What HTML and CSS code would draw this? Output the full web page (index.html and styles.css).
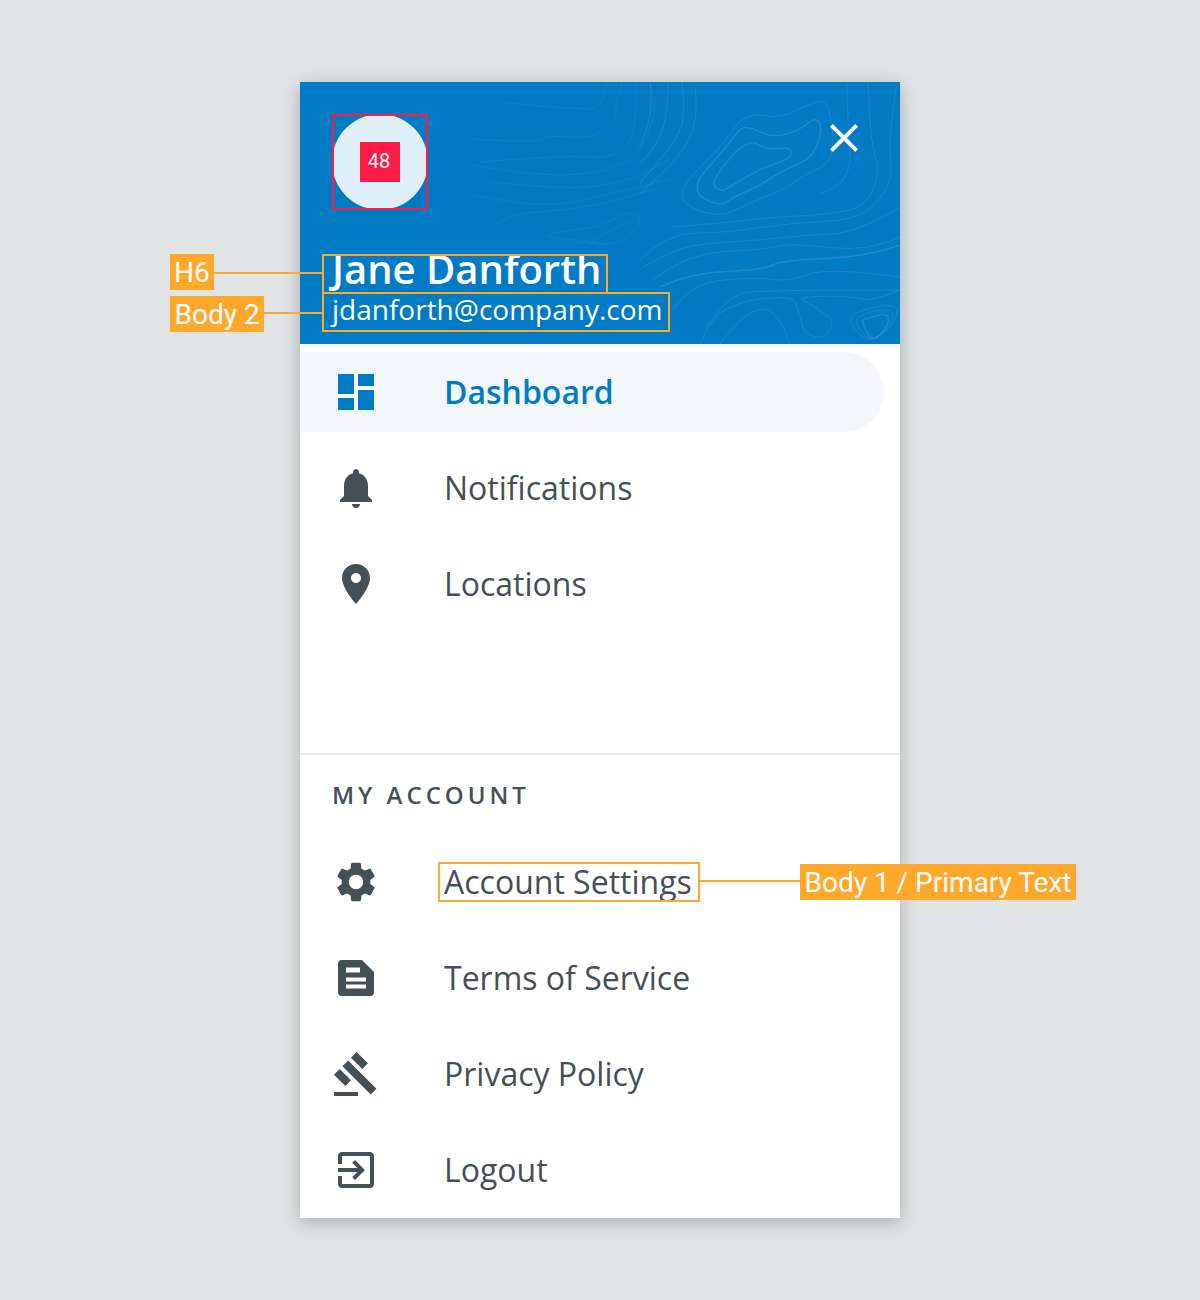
FILE: index.html
```html
<!DOCTYPE html>
<html lang="en">
<head>
    <meta charset="UTF-8">
    <title>Navigation Drawer Spec</title>
    <link rel="stylesheet" href="styles.css">
</head>
<body>
    <div class="stage">
        <aside class="drawer">
            <header class="drawer-header">
                <svg class="contours" viewBox="0 0 600 262" aria-hidden="true">
                    <g class="contour-dim">
                        <path d="M173 57Q233 61 241.500 57 250 53 270 55 290 57 300 50 310 43 313.500 38 317 33 316 27.500 315 22 317.500 16 320 10 322 0"/>
                        <path d="M200 20Q287 29 295 26 303 23 307 0"/>
                        <path d="M180 80Q267 73 287 75 307 77 318.500 70 330 63 333.500 48 337 33 335 0"/>
                        <path d="M173 83Q240 95 273.500 92.500 307 90 323.500 81 340 72 346.500 56 353 40 354 28.500 355 17 350 0"/>
                        <path d="M190 100Q257 107 285 105 313 103 333 95.500 353 88 370 77"/>
                        <path d="M173 113Q240 127 273.500 120 307 113 370 97"/>
                        <path d="M193 143Q215 130 240 130 300 126 353 107"/>
                        <path d="M267.500 149Q303 145 315 136.500 327 128 335 132.500 343 137 335 147 327 157 317 160 307 163 298.500 161.500 290 160 261 156.500 232 153 267.500 149z"/>
                        <path d="M288 163Q305 150 335 138"/>
                    </g>
                    <g class="contour-faint">
                        <path d="M350 1Q355 31 340 65"/>
                        <path d="M368 0Q368 31 362.500 48 357 65 340 81"/>
                        <path d="M382 0Q387 35 378.500 51.500 370 68 340 101"/>
                        <path d="M395 5Q400 38 386.500 61.500 373 85 340 111"/>
                        <path d="M547 0Q547 31 549.500 56 552 81 546 93 540 105 520 112"/>
                        <path d="M396.500 89Q423 63 434 46.500 445 30 462.500 33.500 480 37 498.500 27.500 517 18 522.500 19.500 528 21 530.500 36 533 51 532.500 66 532 81 517.500 87 503 93 495 99.500 487 106 468.500 113.500 450 121 433.500 129 417 137 393.500 126 370 115 396.500 89z"/>
                        <path d="M373 145Q423 141 448 138 473 135 498 134 523 133 545 129 567 125 573.500 106.500 580 88 575 73 570 58 568 0"/>
                        <path d="M340 178Q367 151 395 151 423 151 456.500 146 490 141 523.500 139.500 557 138 570 126.500 583 115 588 103 593 91 590.500 74.500 588 58 597 0"/>
                        <path d="M343 185Q373 168 390 164.500 407 161 435 159.500 463 158 485 155.500 507 153 532 152 557 151 600 125"/>
                        <path d="M353 198Q387 171 425 169.500 463 168 476.500 164.500 490 161 530 165.500 570 170 600 155"/>
                        <path d="M373 228Q390 201 423.500 198 457 195 473.500 197.500 490 200 508.500 192.500 527 185 600 195"/>
                        <path d="M407 245Q427 212 450 210 473 208 600 208"/>
                        <path d="M420 262Q450 222 468 228 480 232 490 262"/>
                        <path d="M503 218Q518 226 530 236Q535 248 523 255Q508 256 503 246Q498 228 495 220Q490 214 473 216Q440 217 420 231Q408 242 400 262"/>
                        <path d="M503 218Q497 216 510 215Q545 212 567 218Q585 215 600 208"/>
                        <path d="M572.500 225.500Q597 220 597 229 597 238 585 250 573 262 563 255 553 248 550.500 239.500 548 231 572.500 225.500z"/>
                        <path d="M573.500 229.500Q592 225 592.500 232.500 593 240 583 250.500 573 261 565.500 254 558 247 556.500 240.500 555 234 573.500 229.500z"/>
                    </g>
                    <g class="contour-bold">
                        <path d="M409 84.500Q430 61 435 53.500 440 46 445 45.500 450 45 461.500 50.500 473 56 486.500 52 500 48 507.500 41.500 515 35 519 40 523 45 518 60.500 513 76 500 81 487 86 472 95.500 457 105 445 110 433 115 426.500 120 420 125 404 116.500 388 108 409 84.500z"/>
                        <path d="M428.500 78Q447 56 457 62 467 68 477 66.500 487 65 490 68 493 71 490 74.500 487 78 472 83 457 88 443.500 96.500 430 105 425 107.500 420 110 415 105 410 100 428.500 78z"/>
                        <path d="M360 205Q390 191 426.500 189.500 463 188 473 183 483 178 525 176.500 567 175 600 163"/>
                        <path d="M575.500 234Q588 230 588.500 236.500 589 243 581 251.500 573 260 568 252.500 563 245 563 238 563 238 575.500 234z"/>
                    </g>
                </svg>
                <div class="avatar"><span class="avatar-size">48</span></div>
                <svg class="close-icon" viewBox="0 0 24 24"><path d="M19 6.41L17.59 5 12 10.59 6.41 5 5 6.41 10.59 12 5 17.59 6.41 19 12 13.41 17.59 19 19 17.59 13.41 12z"/></svg>
                <h1 class="user-name">Jane Danforth</h1>
                <p class="user-email">jdanforth@company.com</p>
            </header>

            <nav class="nav-main">
                <a class="nav-item active">
                    <svg class="nav-icon" viewBox="0 0 24 24"><path d="M3 13h8V3H3zm0 8h8v-6H3zm10 0h8V11h-8zm0-18v6h8V3z"/></svg>
                    <span>Dashboard</span>
                </a>
                <a class="nav-item">
                    <svg class="nav-icon" viewBox="0 0 24 24"><path d="M12 22c1.1 0 2-.9 2-2h-4c0 1.1.89 2 2 2zm6-6v-5c0-3.07-1.64-5.64-4.5-6.32V4c0-.83-.67-1.5-1.5-1.5s-1.5.67-1.5 1.5v.68C7.63 5.36 6 7.92 6 11v5l-2 2v1h16v-1l-2-2z"/></svg>
                    <span>Notifications</span>
                </a>
                <a class="nav-item">
                    <svg class="nav-icon" viewBox="0 0 24 24"><path d="M12 2C8.13 2 5 5.13 5 9c0 5.25 7 13 7 13s7-7.75 7-13c0-3.87-3.13-7-7-7zm0 9.5c-1.38 0-2.5-1.12-2.5-2.5s1.12-2.5 2.5-2.5 2.5 1.12 2.5 2.5-1.12 2.5-2.5 2.5z"/></svg>
                    <span>Locations</span>
                </a>
            </nav>

            <nav class="nav-account">
                <h2 class="nav-title">MY ACCOUNT</h2>
                <a class="nav-item">
                    <svg class="nav-icon" viewBox="0 0 24 24"><path d="M19.14 12.94c.04-.3.06-.61.06-.94 0-.32-.02-.64-.07-.94l2.03-1.58c.18-.14.23-.41.12-.61l-1.92-3.32c-.12-.22-.37-.29-.59-.22l-2.39.96c-.5-.38-1.03-.7-1.62-.94l-.36-2.54c-.04-.24-.24-.41-.48-.41h-3.84c-.24 0-.43.17-.47.41l-.36 2.54c-.59.24-1.13.57-1.62.94l-2.39-.96c-.22-.08-.47 0-.59.22L2.74 8.87c-.12.21-.08.47.12.61l2.03 1.58c-.05.3-.09.63-.09.94s.02.64.07.94l-2.03 1.58c-.18.14-.23.41-.12.61l1.92 3.32c.12.22.37.29.59.22l2.39-.96c.5.38 1.03.7 1.62.94l.36 2.54c.05.24.24.41.48.41h3.84c.24 0 .44-.17.47-.41l.36-2.54c.59-.24 1.13-.56 1.62-.94l2.39.96c.22.08.47 0 .59-.22l1.92-3.32c.12-.22.07-.47-.12-.61l-2.01-1.58zM12 15.6c-1.98 0-3.6-1.62-3.6-3.6s1.62-3.6 3.6-3.6 3.6 1.62 3.6 3.6-1.62 3.6-3.6 3.6z"/></svg>
                    <span>Account Settings</span>
                </a>
                <a class="nav-item">
                    <svg class="nav-icon" viewBox="0 0 24 24"><path fill-rule="evenodd" d="M5 3h10l6 6v10a2 2 0 0 1-2 2H5a2 2 0 0 1-2-2V5a2 2 0 0 1 2-2zm2 3.700v2.600h7V6.700zM7 11.700v2.100h10v-2.100zM7 15.200v2h10v-2z"/></svg>
                    <span>Terms of Service</span>
                </a>
                <a class="nav-item">
                    <svg class="nav-icon" viewBox="0 0 24 24"><path d="M1 21h12v2H1zM5.245 8.070l2.830-2.827 14.140 14.142-2.828 2.828zM9.485 3.827l2.830-2.830 5.657 5.657-2.828 2.828zM.999 12.313l2.830-2.830 5.657 5.657-2.828 2.830z"/></svg>
                    <span>Privacy Policy</span>
                </a>
                <a class="nav-item">
                    <svg class="nav-icon" viewBox="0 0 24 24"><path d="M10.090 15.590L11.500 17l5-5-5-5-1.410 1.410L12.670 11H3v2h9.670l-2.580 2.590zM19 3H5c-1.110 0-2 .9-2 2v4h2V5h14v14H5v-4H3v4c0 1.100.89 2 2 2h14c1.100 0 2-.9 2-2V5c0-1.100-.9-2-2-2z"/></svg>
                    <span>Logout</span>
                </a>
            </nav>
        </aside>

        <!-- spec annotations -->
        <div class="spec-avatar"></div>
        <div class="spec-box spec-name"></div>
        <div class="spec-box spec-email"></div>
        <div class="spec-box spec-settings"></div>
        <div class="spec-line line-name"></div>
        <div class="spec-line line-email"></div>
        <div class="spec-line line-settings"></div>
        <div class="spec-label label-name">H6</div>
        <div class="spec-label label-email">Body 2</div>
        <div class="spec-label label-settings">Body 1 / Primary Text</div>
    </div>
</body>
</html>
```

FILE: styles.css
```css
body {
    margin: 0;
    background-color: #e0e4e5;
    font-family: "Open Sans", sans-serif;
    color: #444f56;
}

.stage {
    position: relative;
    height: 1300px;
    padding-top: 82px;
    box-sizing: border-box;
}

.drawer {
    width: 600px;
    height: 1136px;
    margin: 0 auto;
    display: flex;
    flex-direction: column;
    background-color: #fff;
    box-shadow: 0 4px 16px rgba(0, 0, 0, 0.25);
}

.drawer-header {
    position: relative;
    height: 262px;
    box-sizing: border-box;
    padding: 32px 32px 0;
    background-color: #017bc3;
    color: #fff;
    overflow: hidden;
}

.contours {
    position: absolute;
    top: 0;
    left: 0;
    width: 600px;
    height: 262px;
    fill: none;
}

.contour-dim {
    stroke: rgba(255, 255, 255, 0.06);
    stroke-width: 1;
}

.contour-faint {
    stroke: rgba(255, 255, 255, 0.1);
    stroke-width: 1;
}

.contour-bold {
    stroke: rgba(255, 255, 255, 0.12);
    stroke-width: 1.5;
}

.avatar {
    position: relative;
    width: 96px;
    height: 96px;
    display: flex;
    align-items: center;
    justify-content: center;
    border-radius: 50%;
    background-color: #e0eef7;
}

.avatar-size {
    width: 40px;
    height: 40px;
    padding: 0 2px 2px 0;
    box-sizing: border-box;
    display: flex;
    align-items: center;
    justify-content: center;
    background-color: #ff1a47;
    color: #fff;
    font-family: Roboto, sans-serif;
    font-size: 20px;
}

.close-icon {
    position: absolute;
    top: 32px;
    left: 520px;
    width: 48px;
    height: 48px;
    fill: #fff;
}

.user-name {
    position: relative;
    margin: 39px 0 0;
    font-size: 40px;
    font-weight: 600;
    line-height: 40px;
}

.user-email {
    position: relative;
    margin: 1px 0 0;
    font-size: 28px;
    line-height: 38px;
}

.nav-main {
    flex: 1;
    padding-top: 8px;
}

.nav-item {
    width: 584px;
    height: 80px;
    margin-bottom: 16px;
    display: flex;
    align-items: center;
    font-size: 32px;
    box-sizing: border-box;
    padding-left: 32px;
}

.nav-item span {
    margin: 0 0 2px 65px;
    position: relative;
    left: -1px;
}

.nav-item.active {
    background-color: #f2f7fb;
    border-radius: 0 40px 40px 0;
    color: #017bc3;
    font-weight: 600;
}

.nav-icon {
    width: 48px;
    height: 48px;
    flex-shrink: 0;
    fill: #444f56;
}

.active .nav-icon {
    fill: #017bc3;
}

.nav-account {
    border-top: 2px solid #e8eaeb;
    padding-top: 24px;
}

.nav-account .nav-item:last-child {
    margin-bottom: 8px;
}

.nav-title {
    margin: 0 0 31px 32px;
    font-size: 24px;
    font-weight: 600;
    line-height: 32px;
    letter-spacing: 4px;
}

/* annotations sit on top of the drawer */
.spec-avatar,
.spec-box,
.spec-line,
.spec-label {
    position: absolute;
    box-sizing: border-box;
}

.spec-avatar {
    left: 332px;
    top: 114px;
    width: 96px;
    height: 96px;
    border: 2px solid #ff1a47;
}

.spec-box {
    border: 2px solid #ffa82c;
}

.spec-line {
    height: 2px;
    background-color: #ffa82c;
}

.spec-label {
    height: 36px;
    padding: 0 4.5px;
    background-color: #ffa82c;
    color: #fff;
    font-family: Roboto, sans-serif;
    font-size: 28px;
    line-height: 38px;
    white-space: nowrap;
}

.spec-name {
    left: 322px;
    top: 254px;
    width: 286px;
    height: 40px;
}

.spec-email {
    left: 322px;
    top: 292px;
    width: 348px;
    height: 40px;
}

.spec-settings {
    left: 438px;
    top: 862px;
    width: 262px;
    height: 40px;
}

.line-name {
    left: 214px;
    top: 272px;
    width: 108px;
}

.line-email {
    left: 264px;
    top: 312px;
    width: 58px;
}

.line-settings {
    left: 700px;
    top: 880px;
    width: 100px;
}

.label-name {
    left: 170px;
    top: 254px;
    padding: 0 4px;
}

.label-email {
    left: 170px;
    top: 296px;
}

.label-settings {
    left: 800px;
    top: 864px;
}
```
